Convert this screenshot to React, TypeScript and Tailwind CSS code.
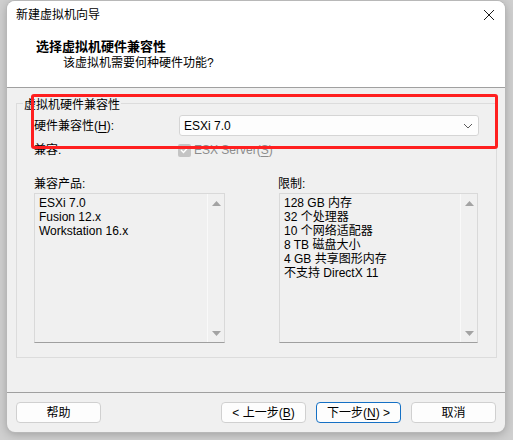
import React from "react";

const font = { fontFamily: '"Liberation Sans", "Noto Sans CJK SC", sans-serif' };

const ScrollArrow = ({ down }: { down?: boolean }) => (
  <svg width="9" height="5" viewBox="0 0 9 5" className="block">
    {down ? <polygon points="0,0 9,0 4.5,5" fill="#a3a3a3" /> : <polygon points="0,5 9,5 4.5,0" fill="#a3a3a3" />}
  </svg>
);

const ListBox = ({ items, width }: { items: string[]; width: string }) => (
  <div className={`flex h-[150px] border border-[#d9d9d9] border-b-[#9f9f9f] bg-[#f0f0f0] ${width}`}>
    <div className="flex-1 pl-[4px] pt-[2px] text-[12px] leading-[14px] text-black">
      {items.map((it) => (
        <div key={it}>{it}</div>
      ))}
    </div>
    <div className="flex w-[17px] flex-col items-center justify-between border-l border-[#f9f9f9] pt-[7px] pb-[6px]">
      <ScrollArrow />
      <ScrollArrow down />
    </div>
  </div>
);

const Button = ({ children, primary }: { children: React.ReactNode; primary?: boolean }) => (
  <button
    className={`flex h-[21px] w-[85px] items-center justify-center rounded-[4px] border bg-[#fdfdfd] text-[12px] leading-none text-black ${
      primary ? "border-[#1570c4]" : "border-[#d0d0d0]"
    }`}
  >
    {children}
  </button>
);

export default function App() {
  return (
    <div className="relative h-[440px] w-[513px] overflow-hidden bg-[#cfcfcf] pl-[7px] pt-[1px]" style={font}>
      <div className="flex h-[431px] w-[498px] flex-col overflow-hidden rounded-[8px] bg-[#f0f0f0] shadow-[0_0_0_1px_#b8b8b8,0_2px_10px_rgba(0,0,0,0.25)]">
        {/* header */}
        <div className="h-[87px] border-b border-[#a0a0a0] bg-white">
          <div className="flex h-[28px] items-center justify-between pl-[9px] pr-[10px]">
            <span className="text-[12px] text-black">新建虚拟机向导</span>
            <svg width="12" height="12" viewBox="0 0 12 12">
              <path d="M1 1 L11 11 M11 1 L1 11" stroke="#1a1a1a" strokeWidth="1" />
            </svg>
          </div>
          <div className="mt-[10px] pl-[29px] text-[13px] font-bold leading-[16px] text-black">选择虚拟机硬件兼容性</div>
          <div className="pl-[56px] text-[12px] leading-[16px] text-black">该虚拟机需要何种硬件功能?</div>
        </div>

        {/* body */}
        <div className="h-[304px] pt-[15px]">
          <div className="ml-[9px] h-[255px] w-[481px] border border-[#dcdcdc]">
            <div className="-mt-[6px] ml-[6px] w-fit bg-[#f0f0f0] px-[1px] text-[12px] leading-[14px] text-black">
              虚拟机硬件兼容性
            </div>

            <div className="mt-[3px] flex h-[21px] items-center pl-[17px]">
              <span className="w-[145px] text-[12px] text-black">
                硬件兼容性(<span className="underline underline-offset-2">H</span>):
              </span>
              <div className="flex h-[21px] w-[300px] items-center justify-between rounded-[3px] border border-[#d5d5d5] bg-[#fdfdfd] pl-[4px] pr-[5px]">
                <span className="text-[12px] text-black">ESXi 7.0</span>
                <svg width="10" height="6" viewBox="0 0 10 6">
                  <path d="M1 1 L5 5 L9 1" fill="none" stroke="#5c5c5c" strokeWidth="1" />
                </svg>
              </div>
            </div>

            <div className="mt-[7px] flex h-[14px] items-center pl-[17px]">
              <span className="w-[144px] text-[12px] text-black">兼容:</span>
              <span className="flex h-[13px] w-[13px] items-center justify-center rounded-[2px] bg-[#c4c4c4]">
                <svg width="9" height="8" viewBox="0 0 9 8">
                  <path d="M1 4 L3.5 6.5 L8 1.5" fill="none" stroke="#ffffff" strokeWidth="1.4" />
                </svg>
              </span>
              <span className="ml-[3px] text-[12px] text-[#8c8c8c]">
                ESX Server(<span className="underline underline-offset-2">S</span>)
              </span>
            </div>

            <div className="mt-[20px] flex pl-[17px]">
              <div className="w-[191px]">
                <div className="h-[14px] text-[12px] leading-[14px] text-black">兼容产品:</div>
                <div className="mt-[2px]">
                  <ListBox width="w-[191px]" items={["ESXi 7.0", "Fusion 12.x", "Workstation 16.x"]} />
                </div>
              </div>
              <div className="ml-[53px] w-[200px]">
                <div className="h-[14px] text-[12px] leading-[14px] text-black">限制:</div>
                <div className="mt-[2px] pl-[1px]">
                  <ListBox
                    width="w-[199px]"
                    items={["128 GB 内存", "32 个处理器", "10 个网络适配器", "8 TB 磁盘大小", "4 GB 共享图形内存", "不支持 DirectX 11"]}
                  />
                </div>
              </div>
            </div>
          </div>
        </div>

        {/* footer */}
        <div className="flex flex-1 items-start justify-between border-t border-[#a0a0a0] px-[9px] pt-[9px]">
          <Button>帮助</Button>
          <div className="flex gap-[10px]">
            <Button>
              &lt; 上一步(<span className="underline underline-offset-2">B</span>)
            </Button>
            <Button primary>
              下一步(<span className="underline underline-offset-2">N</span>) &gt;
            </Button>
            <Button>取消</Button>
          </div>
        </div>
      </div>

      {/* highlight frame drawn over the hardware row */}
      <div className="pointer-events-none absolute left-[31px] top-[94px] h-[55px] w-[467px] rounded-[3px] border-[3px] border-[#ff1f1f]" />
    </div>
  );
}
